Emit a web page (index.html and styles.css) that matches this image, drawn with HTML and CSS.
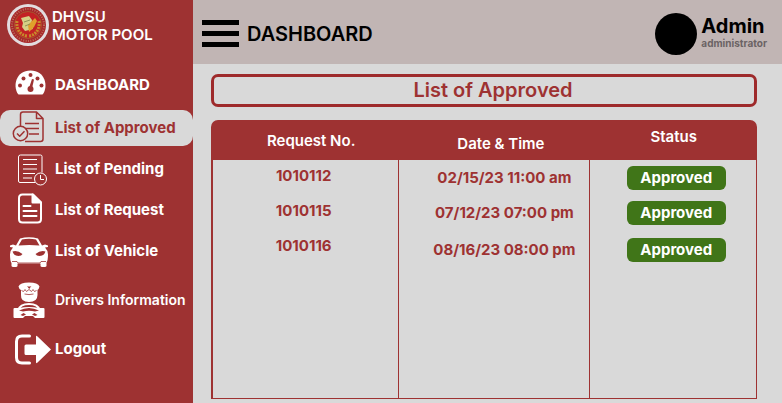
FILE: index.html
```html
<!DOCTYPE html>
<html lang="en">
<head>
<meta charset="utf-8">
<title>DHVSU Motor Pool</title>
<link rel="stylesheet" href="styles.css">
</head>
<body>
<div class="app">
  <aside class="sidebar">
    <div class="brand">
      <svg class="brand-logo" viewBox="0 0 42 42" aria-hidden="true">
        <circle cx="21" cy="21" r="21" fill="#e2dcdf"/>
        <circle cx="21" cy="21" r="18" fill="#a8262a"/>
        <circle cx="21" cy="21" r="16" fill="none" stroke="#b9705a" stroke-width="2" stroke-dasharray="1 1.4"/>
        <circle cx="21" cy="21" r="13.5" fill="#c32124" stroke="#a4562f" stroke-width="1"/>
        <path d="M10 17c-1 8 3 14 10 15M32 17c1 8-3 14-10 15" fill="none" stroke="#c78a2c" stroke-width="3" stroke-dasharray="2 1"/>
        <path d="M14 14l8-2 3 4-1 5 2 4-8 2-3-4 1-4z" fill="#d6cf85"/>
        <path d="M21 21l7-7 2 3-3 6-5 5z" fill="#e0a02c"/>
        <path d="M17 18l6-2M18 22l5-2" stroke="#8f9255"/>
      </svg>
      <div class="brand-name">DHVSU<br>MOTOR POOL</div>
    </div>
    <nav class="nav">
      <a class="nav-item nav-home" href="#">
        <svg class="nav-icon" viewBox="0 0 54 36" aria-hidden="true">
          <path d="M18 27C12.500 19 16 3.500 30.500 3.500S48.500 19 43 27Q42.500 27.500 41.500 27.500H19.500Q18.500 27.500 18 27z" fill="#fff"/>
          <g fill="#9e3232"><circle cx="20" cy="18.500" r="2"/><circle cx="23.500" cy="11.500" r="2"/><circle cx="30.500" cy="8" r="2"/><circle cx="37.500" cy="11.500" r="2"/><circle cx="41.500" cy="18.500" r="2"/><circle cx="30.500" cy="22" r="3"/><path d="M32 12l2 .5-2 9-3-.5z"/></g>
        </svg>
        DASHBOARD</a>
      <a class="nav-item compact active" href="#" aria-current="page">
        <svg class="nav-icon line" viewBox="0 0 54 36" aria-hidden="true">
          <path d="M20.500 16V4.500Q20.500 2 23 2H36.500L43 8.500V29Q43 31.500 40.500 31.500H25M36.500 2V8.500H43M25 13.500H39M25 18.500H39M29 24H39"/>
          <circle cx="20.500" cy="23.500" r="7.200"/><path d="M17 23.500l2.700 2.700 4.800-5"/>
        </svg>
        List of Approved</a>
      <a class="nav-item" href="#">
        <svg class="nav-icon line thin" viewBox="0 0 54 36" aria-hidden="true">
          <path d="M35 31.500H20Q18.500 31.500 18.500 30V6Q18.500 4 20.500 4H40.500Q42 4 42 5.500V21.500M23 8.500H37M23 13.500H37M23 18H37M23 22.500H35M23 27H32"/>
          <circle cx="40.500" cy="28" r="6"/><path d="M40.500 24V28.500H44"/>
        </svg>
        List of Pending</a>
      <a class="nav-item compact" href="#">
        <svg class="nav-icon line bold" viewBox="0 0 54 36" aria-hidden="true">
          <path d="M33 2.500H22.500Q19 2.500 19 6V27Q19 30.500 22.500 30.500H37.500Q41 30.500 41 27V10.500z"/><path d="M32.500 2.500V10.500H41z" fill="#fff"/>
          <path d="M23.500 14H30.500M23.500 19H36.500M23.500 24H36.500" stroke-linecap="round"/>
        </svg>
        List of Request</a>
      <a class="nav-item" href="#">
        <svg class="nav-icon" viewBox="0 0 54 36" aria-hidden="true">
          <path d="M10 12.500l3-1 3 1 4-7Q29 3 38 5.500l4 7 3-1 3 1v1.500l-3 .5q3 3 3 7 0 6-1.500 8V33q0 1-2 1h-2q-2 0-2-1v-2.500H17.500V33q0 1-2 1h-2q-2 0-2-1v-3Q10 28 10 21.500q0-4 3-7l-3-.5z" fill="#fff"/>
          <path d="M18.500 12.500l3.500-6q7-1.500 14 0l3.500 6q-10-1-21 0zM12.500 18.500q5-1.500 10 2.500-1 2-4 2-4.500 0-6-4.500zM45.500 18.500q-5-1.500-10 2.500 1 2 4 2 4.500 0 6-4.500z" fill="#9e3232"/>
          <path d="M12 28.500h5l1 1.500h22l1-1.500h5" fill="none" stroke="#9e3232" stroke-width=".8"/>
        </svg>
        List of Vehicle</a>
      <a class="nav-item tall" href="#">
        <svg class="nav-icon" viewBox="0 0 54 36" aria-hidden="true">
          <path d="M18.500 4.500Q20 .5 29 .5T39.500 4.500Q39 7 37.500 8v5q0 7-8.500 7T21 13V8q-2-1-2.500-3.500z" fill="#fff"/>
          <path d="M21.500 8.500l2 1 1.500-2 1.500 2 2.500-2 2.500 2 1.500-2 1.500 2 2-1M24.500 12q4.500 1.200 9 0" fill="none" stroke="#9e3232" stroke-width=".8"/>
          <path d="M27 4q2 1 4.400 0L29.200 7zM28.800 5h.8v2h-.8z" fill="#9e3232"/>
          <path d="M18.500 28Q20 22 29 22t10.500 6" fill="none" stroke="#fff" stroke-width="2.200"/>
          <path d="M14.500 26H19Q24 25 29 25t10 1h4.500q1 0 1 1v8q0 1-1 1H35l-2-2h-8l-2 2h-8.500q-1 0-1-1v-8q0-1 1-1z" fill="#fff"/>
          <path d="M19 28.500Q24 26 29 26t10 2.500l-4 1q-6-1.500-12 0zM20.500 33l3-2 2.500 1.500-3 1.500zM37.500 33l-3-2-2.500 1.500 3 1.500z" fill="#9e3232"/>
        </svg>
        <span class="small">Drivers Information</span></a>
      <a class="nav-item" href="#">
        <svg class="nav-icon" viewBox="0 0 54 36" aria-hidden="true">
          <path d="M29.500 5H22Q16.500 5 16.500 10.500V26.500Q16.500 32 22 32H29.500" fill="none" stroke="#fff" stroke-width="3" stroke-linecap="round"/>
          <path d="M26 13.500H36V6q0-2 1.500-.5L51 18.500 37.500 31.500Q36 33 36 31V24H26q-1.500 0-1.500-1.500V15q0-1.500 1.500-1.500z" fill="#fff"/>
        </svg>
        Logout</a>
    </nav>
  </aside>
  <div class="page">
    <header class="topbar">
      <button class="menu" type="button" aria-label="Menu"><span></span><span></span><span></span></button>
      <h1>DASHBOARD</h1>
      <div class="user">
        <span class="avatar"></span>
        <div><div class="user-name">Admin</div><div class="user-role">administrator</div></div>
      </div>
    </header>
    <main class="content">
      <h2>List of Approved</h2>
      <table>
        <colgroup><col class="col-request"><col class="col-date"><col class="col-status"></colgroup>
        <thead>
          <tr><th class="request">Request No.</th><th class="date">Date &amp; Time</th><th class="status">Status</th></tr>
        </thead>
        <tbody>
          <tr class="row"><td class="request">1010112</td><td class="date">02/15/23 11:00 am</td><td class="status"><span class="badge">Approved</span></td></tr>
          <tr class="row"><td class="request">1010115</td><td class="date">07/12/23 07:00 pm</td><td class="status"><span class="badge">Approved</span></td></tr>
          <tr class="row last"><td class="request">1010116</td><td class="date">08/16/23 08:00 pm</td><td class="status"><span class="badge">Approved</span></td></tr>
          <tr class="filler"><td></td><td></td><td></td></tr>
        </tbody>
      </table>
    </main>
  </div>
</div>
</body>
</html>
```
FILE: styles.css
```css
* { box-sizing: border-box; }

body {
  margin: 0;
  background: #d9d9d9;
  color: #9e3232;
  font: 700 15px/20px Inter, sans-serif;
}

.app {
  display: grid;
  grid-template-columns: 193px 1fr;
  min-height: 100vh;
}

.sidebar { background: #9e3232; color: #fff; }

.brand {
  display: flex;
  gap: 3px;
  height: 62px;
  padding: 4px 0 0 7px;
}
.brand-logo { width: 42px; height: 42px; }
.brand-name { padding-top: 4px; font-weight: 600; line-height: 18px; }

.nav { display: flex; flex-direction: column; }
.nav-item {
  display: flex;
  align-items: center;
  height: 46px;
  gap: 1px;
  color: #fff;
  text-decoration: none;
  white-space: nowrap;
}
.nav-home { margin-bottom: 2px; }
.nav-item.compact { height: 36px; }
.nav-item.tall { height: 52px; }
.nav-item.active {
  background: #d9d9d9;
  color: #9e3232;
  border-radius: 10px;
}
.nav-icon { width: 54px; height: 36px; flex: none; }
.line { fill: none; stroke: currentColor; stroke-width: 1.5; stroke-linejoin: round; }
.line.thin { stroke-width: 1; }
.line.bold { stroke-width: 2; }
.small { font-size: 14px; font-weight: 600; }

.page { display: flex; flex-direction: column; }

.topbar {
  display: flex;
  align-items: center;
  height: 64px;
  padding: 3px 15px 0 9px;
  background: #c1b5b4;
  color: #000;
}
.menu {
  display: flex;
  flex-direction: column;
  gap: 6px;
  width: 37px;
  padding: 0;
  border: 0;
  background: none;
}
.menu span { height: 5px; background: #000; }
h1 { margin: 0 0 0 8px; font-size: 20px; font-weight: 600; line-height: 24px; }
.user { display: flex; align-items: center; gap: 4px; margin-left: auto; }
.avatar { width: 42px; height: 42px; border-radius: 50%; background: #000; }
.user-name { margin-top: -4px; font-size: 20px; line-height: 22px; }
.user-role { color: #6b6364; font-size: 10px; line-height: 12px; }

.content {
  flex: 1;
  display: grid;
  grid-template-rows: auto 1fr;
  gap: 13px;
  padding: 10px 25px 4px 18px;
}
h2 {
  margin: 0;
  padding: 1px 0 2px 18px;
  border: 3px solid #9e2a2b;
  border-radius: 7px;
  font-size: 20px;
  font-weight: 600;
  line-height: 24px;
  text-align: center;
}

table {
  width: 100%;
  height: 100%;
  border-spacing: 0;
  table-layout: fixed;
  text-align: center;
}
.col-request { width: 34.5%; }
.col-date { width: 35%; }
.col-status { width: 30.5%; }
th {
  height: 40px;
  padding: 7px 0 6px;
  background: #9e3232;
  color: #fff;
  font-weight: 600;
}
th:first-child { border-top-left-radius: 7px; }
th:last-child { border-top-right-radius: 7px; }
th.request { padding-left: 12px; vertical-align: middle; }
th.date { padding-left: 12px; vertical-align: bottom; }
th.status { vertical-align: top; }

td { padding: 0; border-right: 1px solid #9e3232; }
td:first-child { border-left: 2px solid #9e3232; }
.row { height: 35px; }
.row.last { height: 40px; }
td.request { padding-top: 6px; padding-right: 4px; vertical-align: top; }
td.date { padding-left: 20px; }
td.status { padding-left: 6px; }
.filler td { border-bottom: 1px solid #9e3232; }

.badge {
  display: block;
  width: 99px;
  margin: 0 auto;
  padding: 2px 0;
  border-radius: 6px;
  background: #407518;
  color: #fff;
}
```
